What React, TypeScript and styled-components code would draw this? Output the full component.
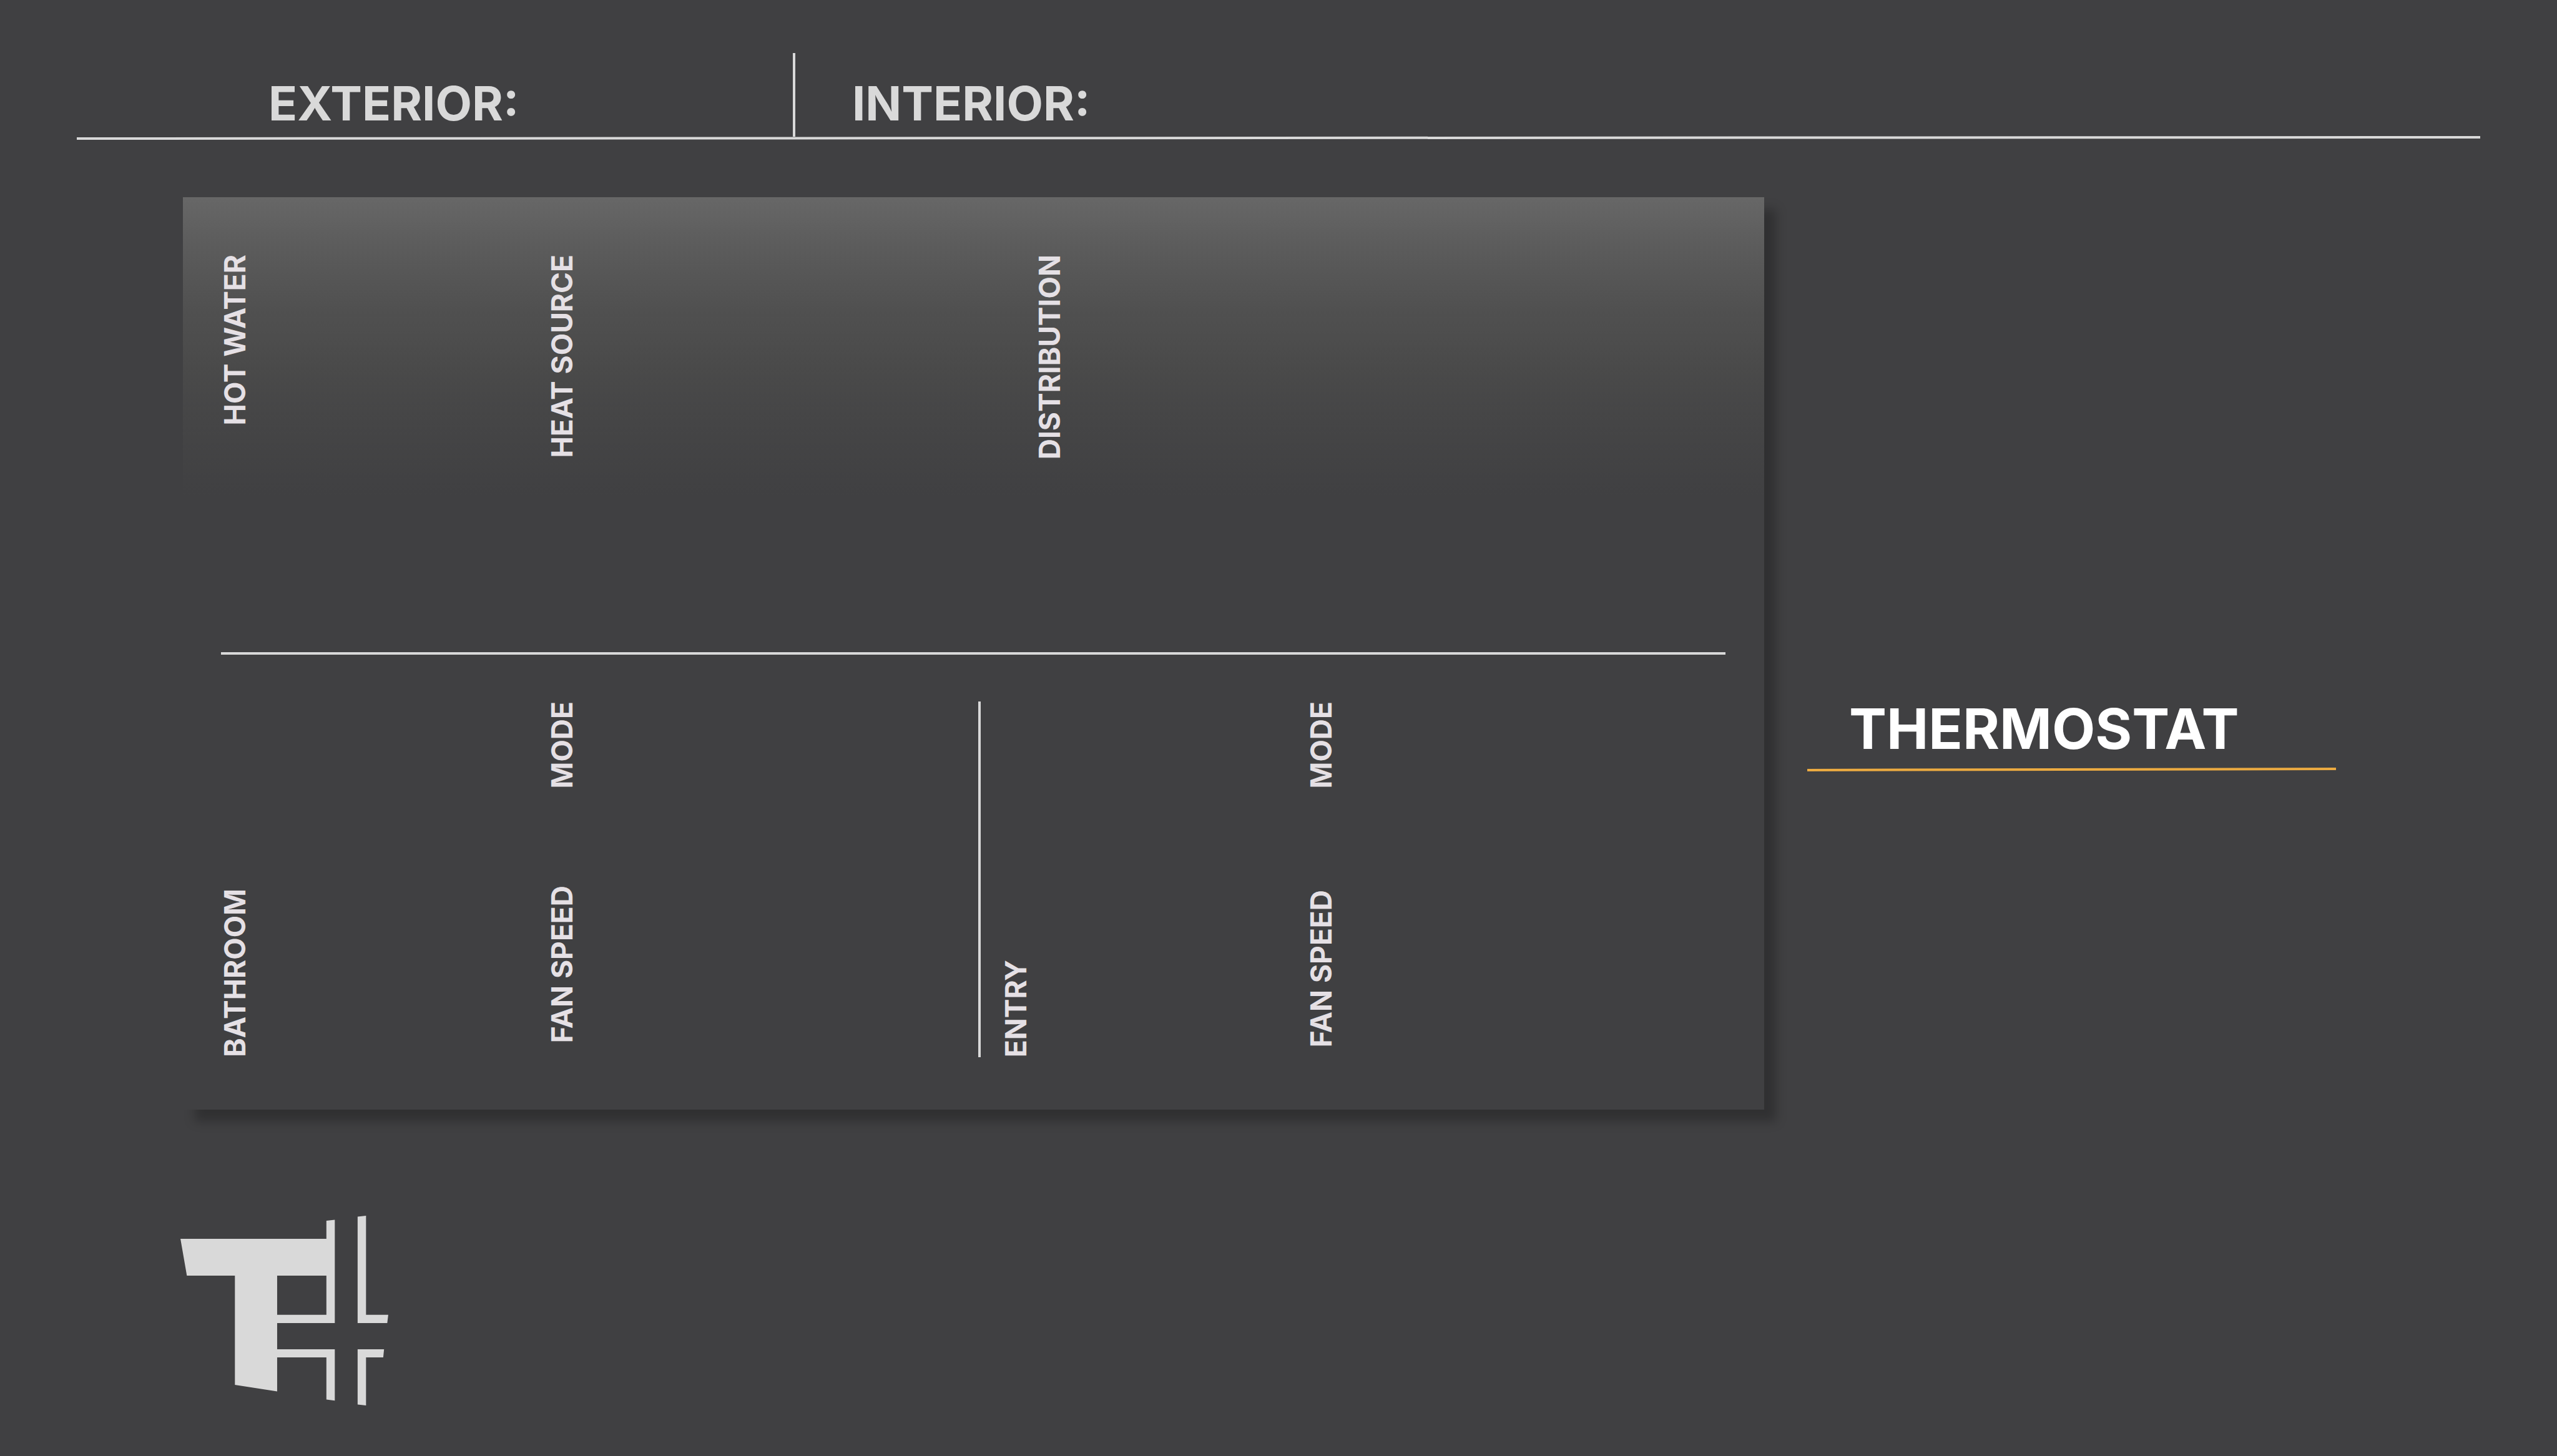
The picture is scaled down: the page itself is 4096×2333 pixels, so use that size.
import React from "react";
import styled, { createGlobalStyle } from "styled-components";

const color = {
  page: "#404042",
  line: "#d9d9d9",
  heading: "#d9d9d9",
  label: "#e5e0e5",
  title: "#ffffff",
  accent: "#ecab41",
};

const GlobalStyle = createGlobalStyle`
  * { box-sizing: border-box; }
  body {
    margin: 0;
    background: ${color.page};
    font-family: Inter, "Liberation Sans", sans-serif;
    font-weight: 700;
  }
  h1, h2, h3, p { margin: 0; font: inherit; }
`;

const Page = styled.div`
  min-height: 100vh;
  padding: 85px 0 80px;
`;

const Header = styled.header`
  padding: 0 123px;
`;

const Readings = styled.div`
  display: grid;
  grid-template-columns: 1147fr 2703fr;
`;

const Reading = styled.h2<{ $inset: number; $divided?: boolean }>`
  padding: 34px 0 8px ${(p) => p.$inset}px;
  border-left: ${(p) => (p.$divided ? `4px solid ${color.line}` : "0")};
  color: ${color.heading};
  font-size: 76px;
  line-height: 92px;
`;

const Rule = styled.hr<{ $accent?: boolean; $tilt?: number }>`
  height: 4px;
  margin: 0;
  border: 0;
  background: ${(p) => (p.$accent ? color.accent : color.line)};
  transform: ${(p) => (p.$tilt ? `rotate(${p.$tilt}deg)` : "none")};
`;

const Main = styled.main`
  display: grid;
  grid-template-columns: 2533fr 847fr;
  column-gap: 69px;
  padding: 93px 354px 0 293px;
`;

const Panel = styled.section`
  padding: 92px 62px 84px 61px;
  background: linear-gradient(
    #676767 0,
    #5c5c5c 76px,
    #505050 180px,
    #4a4a4a 270px,
    #454546 360px,
    #404042 480px
  );
  box-shadow: 19px 19px 16px rgba(0, 0, 0, 0.25);
`;

const Sources = styled.div`
  display: grid;
  grid-template-columns: 524fr 781fr 1105fr;
  height: 637px;
`;

const Rooms = styled.div`
  display: grid;
  grid-template-columns: 1213fr 1197fr;
  margin-top: 75px;
`;

const Room = styled.section<{ $columns: string; $divided?: boolean }>`
  display: grid;
  grid-template-columns: ${(p) => p.$columns};
  height: 570px;
  padding-left: ${(p) => (p.$divided ? 34 : 0)}px;
  border-left: ${(p) => (p.$divided ? `4px solid ${color.line}` : "0")};
`;

const Controls = styled.div<{ $base: number }>`
  display: flex;
  flex-direction: column;
  justify-content: space-between;
  padding-bottom: ${(p) => p.$base}px;
`;

const Label = styled.h3<{ $bottom?: boolean }>`
  align-self: ${(p) => (p.$bottom ? "end" : "start")};
  justify-self: start;
  writing-mode: vertical-rl;
  transform: rotate(180deg);
  color: ${color.label};
  font-size: 46px;
  line-height: 44px;
  white-space: nowrap;
`;

const Thermostat = styled.aside`
  padding-top: 802px;
`;

const Title = styled.h1`
  padding: 0 0 13px 67px;
  color: ${color.title};
  font-size: 90px;
  line-height: 100px;
`;

const Footer = styled.footer`
  padding: 170px 289px 0;
`;

const Mark = styled.svg`
  display: block;
  width: 333px;
  height: 304px;
  fill: ${color.line};
`;

function Logo() {
  return (
    <Mark viewBox="60 72 1038 948" role="img" aria-label="Logo">
      <path
        fillRule="evenodd"
        d="M60 187H789V97L831 92V608H543V739H831V996L789 990V780H543V950L332 917V371H92ZM543 371V567H789V371Z"
      />
      <path d="M945 77L987 72V567H1098L1093 608H945Z" />
      <path d="M945 739H1077L1073 780H987V1020L945 1015Z" />
    </Mark>
  );
}

export default function App() {
  return (
    <>
      <GlobalStyle />
      <Page>
        <Header>
          <Readings>
            <Reading $inset={307}>EXTERIOR:</Reading>
            <Reading $inset={91} $divided>
              INTERIOR:
            </Reading>
          </Readings>
          <Rule $tilt={-0.03} />
        </Header>
        <Main>
          <Panel>
            <Sources>
              <Label>HOT WATER</Label>
              <Label>HEAT SOURCE</Label>
              <Label>DISTRIBUTION</Label>
            </Sources>
            <Rule />
            <Rooms>
              <Room $columns="524fr 689fr">
                <Label $bottom>BATHROOM</Label>
                <Controls $base={23}>
                  <Label>MODE</Label>
                  <Label>FAN SPEED</Label>
                </Controls>
              </Room>
              <Room $columns="489fr 670fr" $divided>
                <Label $bottom>ENTRY</Label>
                <Controls $base={16}>
                  <Label>MODE</Label>
                  <Label>FAN SPEED</Label>
                </Controls>
              </Room>
            </Rooms>
          </Panel>
          <Thermostat>
            <Title>THERMOSTAT</Title>
            <Rule $accent $tilt={-0.13} />
          </Thermostat>
        </Main>
        <Footer>
          <Logo />
        </Footer>
      </Page>
    </>
  );
}
